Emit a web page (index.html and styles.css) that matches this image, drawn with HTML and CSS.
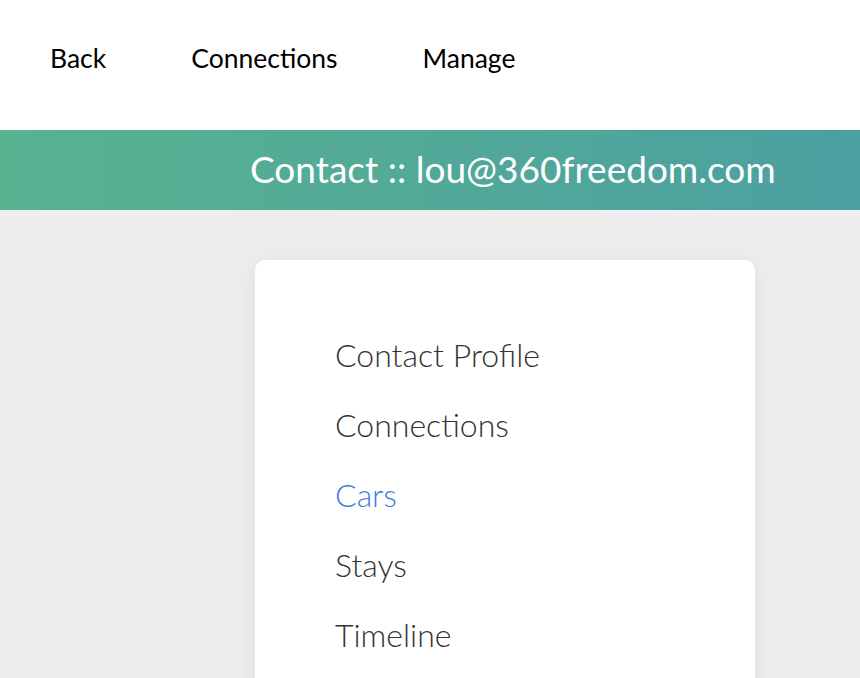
FILE: index.html
```html
<!DOCTYPE html>
<html>
<head>
<meta charset="utf-8">
<link rel="stylesheet" href="styles.css">
</head>
<body>
<nav class="topnav">
  <a class="navlink" href="#">Back</a>
  <a class="navlink" href="#">Connections</a>
  <a class="navlink" href="#">Manage</a>
</nav>
<header class="banner">
  <h1 class="banner-title">Contact :: lou@360freedom.com</h1>
</header>
<main class="content">
  <section class="card">
    <ul class="menu">
      <li class="menu-item">Contact Profile</li>
      <li class="menu-item">Connections</li>
      <li class="menu-item active">Cars</li>
      <li class="menu-item">Stays</li>
      <li class="menu-item">Timeline</li>
    </ul>
  </section>
</main>
</body>
</html>
```
FILE: styles.css
```css
html, body {
  margin: 0;
  padding: 0;
  background: #eeeeee;
  font-family: Lato, "Noto Sans", sans-serif;
  height: 100%;
  overflow: hidden;
}
.topnav {
  background: #ffffff;
  height: 130px;
  display: flex;
  align-items: flex-start;
  gap: 85px;
  padding: 44px 0 0 50px;
  box-sizing: border-box;
}
.navlink {
  color: #000000;
  text-decoration: none;
  font-size: 26.5px;
  font-weight: 400;
  line-height: 28px;
}
.banner {
  height: 80px;
  background: linear-gradient(90deg, #59b290 0%, #4ba0a0 100%);
  display: flex;
  align-items: center;
  padding-left: 250px;
  padding-bottom: 4px;
  box-sizing: border-box;
}
.banner-title {
  margin: 0;
  color: #ffffff;
  font-size: 37px;
  font-weight: 400;
  line-height: 1;
}
.content {
  padding: 50px 0 0 255px;
}
.card {
  width: 500px;
  height: 600px;
  background: #ffffff;
  border-radius: 10px;
  box-shadow: 0 4px 28px rgba(0, 0, 0, 0.07);
  padding-top: 75px;
  box-sizing: border-box;
}
.menu {
  list-style: none;
  margin: 0;
  padding: 0 0 0 80px;
  display: flex;
  flex-direction: column;
}
.menu-item {
  font-size: 32px;
  font-weight: 300;
  color: #333333;
  line-height: 40px;
  margin-bottom: 30px;
}
.menu-item.active {
  color: #3a7de0;
}
```
